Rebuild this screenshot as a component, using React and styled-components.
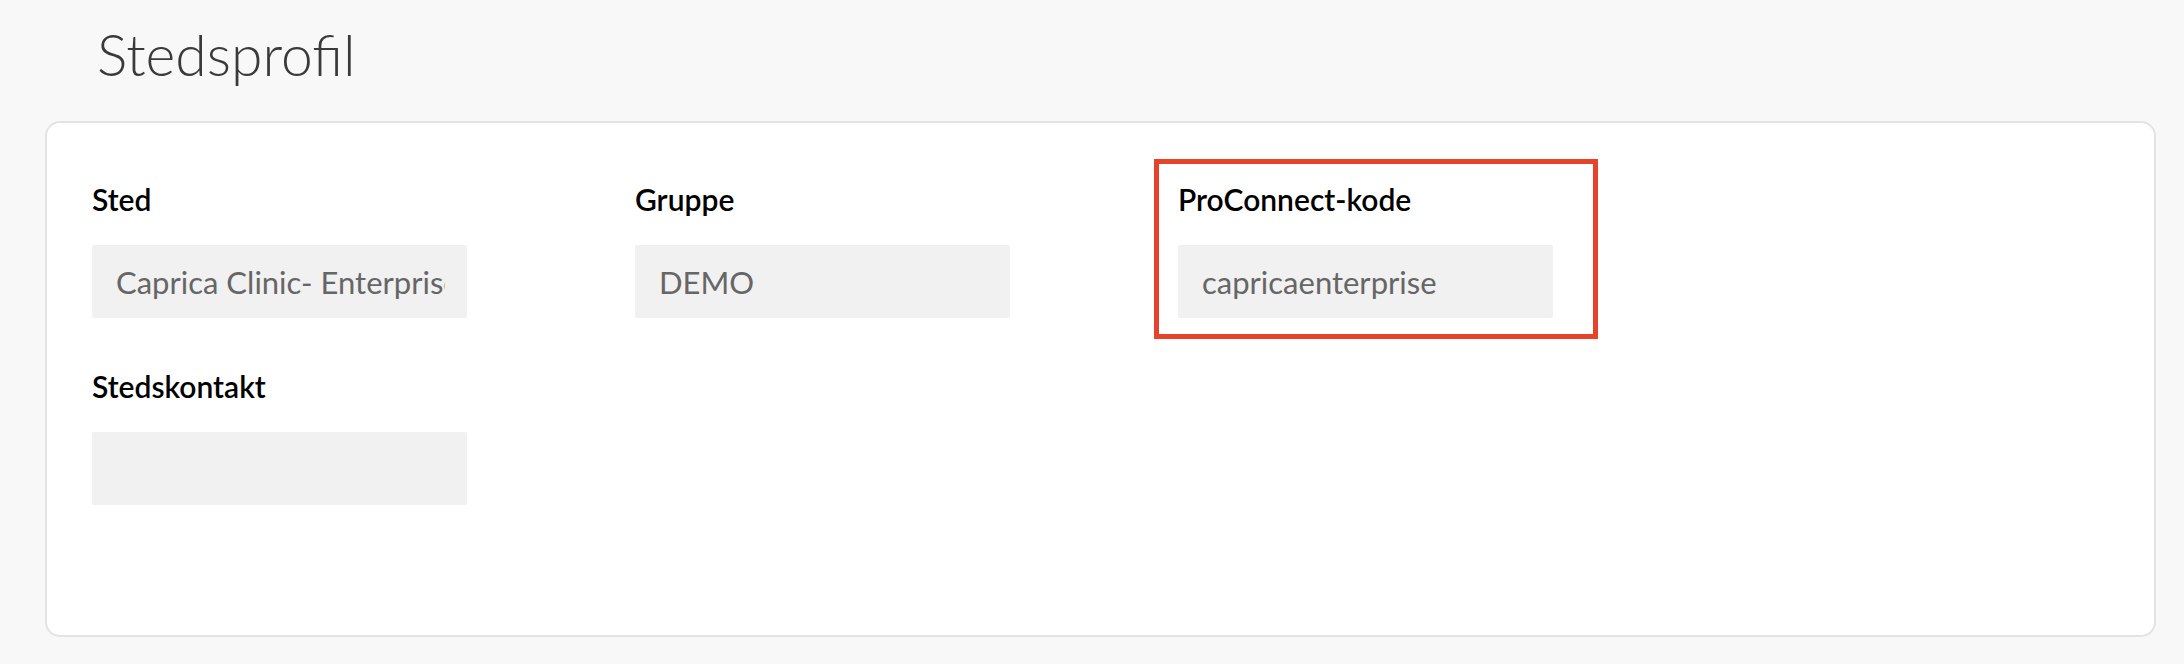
import React from 'react';
import styled, { createGlobalStyle } from 'styled-components';

const GlobalStyle = createGlobalStyle`
  body {
    margin: 0;
    background: #f8f8f8;
    font-family: Lato, "Open Sans", sans-serif;
  }
`;

const Page = styled.div`
  display: flex;
  flex-direction: column;
  padding: 20px 28px 30px 45px;
`;

const Title = styled.h1`
  margin: 0 0 33px 52px;
  font-size: 57px;
  line-height: 68px;
  font-weight: 300;
  color: #3a3a3a;
`;

const Card = styled.div`
  background: #fff;
  border: 2px solid #e3e3e3;
  border-radius: 15px;
  padding: 59px 45px 130px 45px;
`;

const Fields = styled.div`
  display: grid;
  grid-template-columns: repeat(3, 375px);
  column-gap: 168px;
  row-gap: 51px;
`;

const Field = styled.div`
  position: relative;
  display: flex;
  flex-direction: column;
  gap: 29px;
`;

const Label = styled.label`
  font-size: 30px;
  line-height: 34px;
  font-weight: 600;
  color: #000;
`;

const Input = styled.input`
  box-sizing: border-box;
  width: 375px;
  height: 73px;
  border: none;
  border-radius: 2px;
  background: #f1f1f1;
  padding: 0 22px 0 24px;
  font-family: Lato, "Open Sans", sans-serif;
  font-size: 31px;
  color: #666;
  outline: none;
`;

const Highlight = styled.div`
  position: absolute;
  left: -24px;
  top: -23px;
  width: 444px;
  height: 180px;
  box-sizing: border-box;
  border: 5px solid #e5432a;
  pointer-events: none;
`;

const fields = [
  { label: 'Sted', value: 'Caprica Clinic- Enterprise' },
  { label: 'Gruppe', value: 'DEMO' },
  { label: 'ProConnect-kode', value: 'capricaenterprise', marked: true },
  { label: 'Stedskontakt', value: '' },
];

export default function App() {
  return (
    <Page>
      <GlobalStyle />
      <Title>Stedsprofil</Title>
      <Card>
        <Fields>
          {fields.map((f) => (
            <Field key={f.label}>
              <Label>{f.label}</Label>
              <Input readOnly value={f.value} />
              {f.marked && <Highlight />}
            </Field>
          ))}
        </Fields>
      </Card>
    </Page>
  );
}
